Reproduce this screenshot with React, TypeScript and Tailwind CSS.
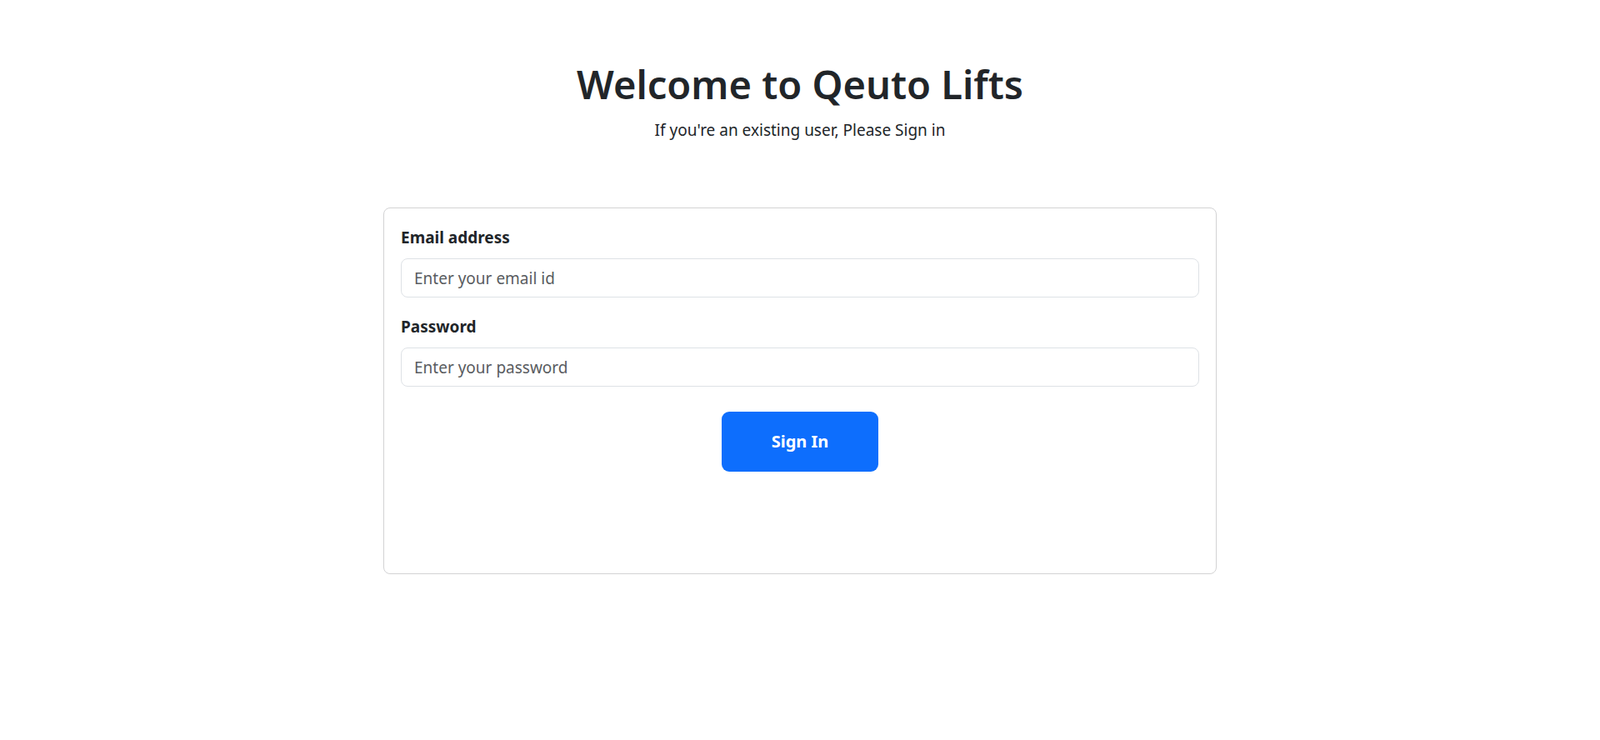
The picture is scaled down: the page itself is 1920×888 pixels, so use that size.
export default function App() {
  return (
    <div className="min-h-screen bg-white text-[#212529] font-['Noto_Sans','Open_Sans',sans-serif]">
      <div className="pt-[70px] text-center">
        <h1 className="text-[47px] font-semibold leading-[62px] mb-[9px]">Welcome to Qeuto Lifts</h1>
        <p className="text-[19px] leading-[30px]">If you're an existing user, Please Sign in</p>
      </div>

      <div className="mx-auto mt-[78px] w-[1000px] min-h-[440px] rounded-[8px] border border-[#d3d3d4] p-5">
        <form onSubmit={(e) => e.preventDefault()}>
          <div className="mb-5">
            <label htmlFor="email" className="block text-[19px] font-bold leading-[30px] mb-[10px]">
              Email address
            </label>
            <input
              id="email"
              type="email"
              placeholder="Enter your email id"
              className="block w-full h-[47px] rounded-[8px] border border-[#dee2e6] px-[15px] text-[19px] outline-none placeholder:text-[#595c5f]"
            />
          </div>
          <div>
            <label htmlFor="password" className="block text-[19px] font-bold leading-[30px] mb-[10px]">
              Password
            </label>
            <input
              id="password"
              type="password"
              placeholder="Enter your password"
              className="block w-full h-[47px] rounded-[8px] border border-[#dee2e6] px-[15px] text-[19px] outline-none placeholder:text-[#595c5f]"
            />
          </div>
          <div className="mt-[30px] flex justify-center">
            <button
              type="submit"
              className="w-[188px] h-[72px] rounded-[9px] bg-[#0d6efd] text-[20px] font-bold text-white"
            >
              Sign In
            </button>
          </div>
        </form>
      </div>
    </div>
  );
}
